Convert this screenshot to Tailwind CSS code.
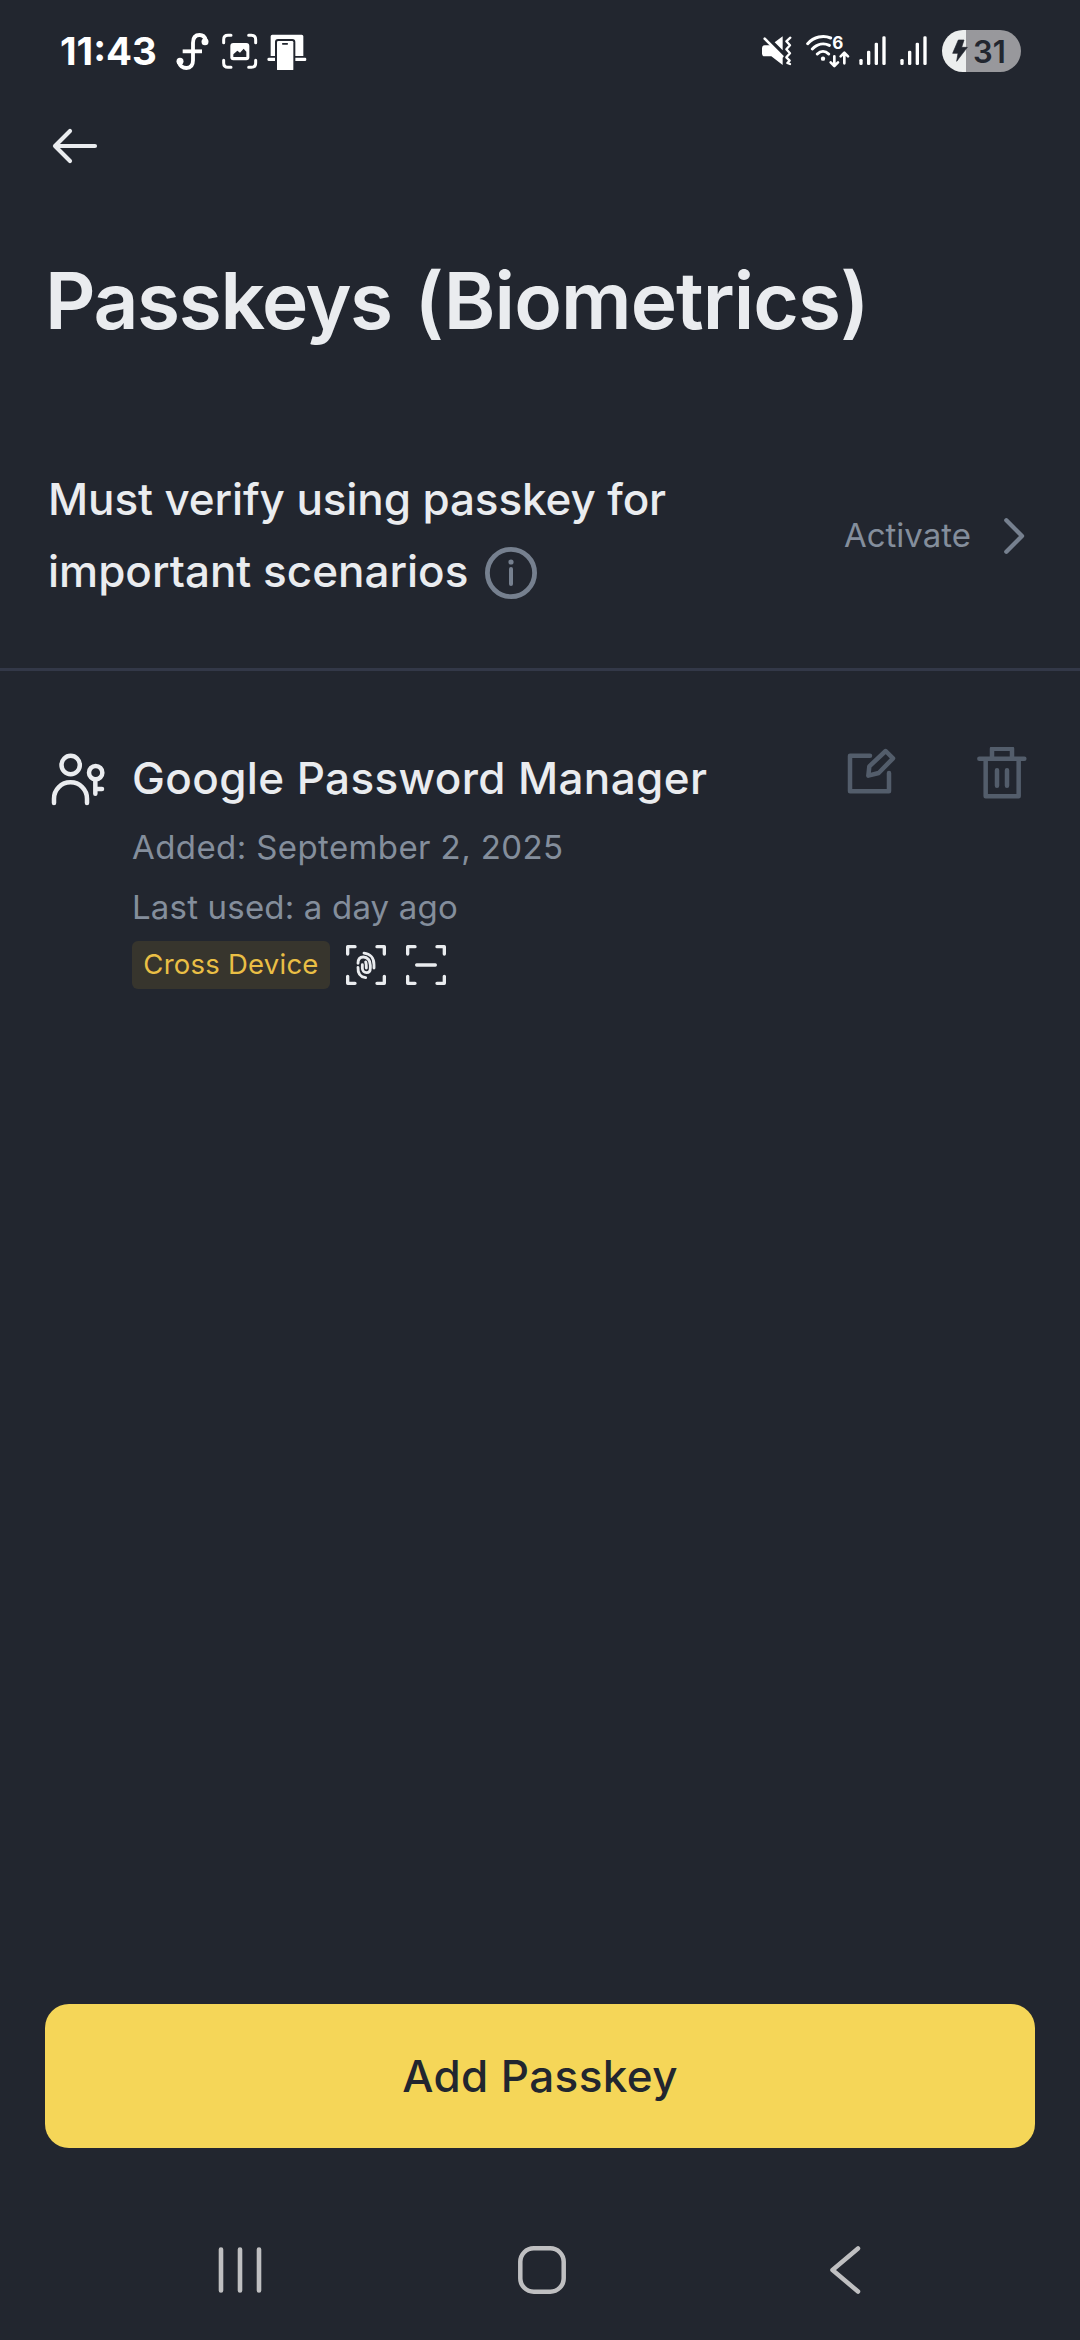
<!DOCTYPE html>
<html lang="en">
<head>
<meta charset="utf-8">
<title>Passkeys (Biometrics)</title>
<script src="https://cdn.jsdelivr.net/npm/@tailwindcss/browser@4"></script>
</head>
<body class="bg-[#22262f]">
<div class="flex h-[2340px] w-[1080px] flex-col overflow-hidden bg-[#22262f] font-['Inter',sans-serif] text-[#eaecef]">

  <!-- Status bar -->
  <header class="flex h-[102px] shrink-0 items-center pl-[60px] pr-[59px] text-white">
    <span class="w-[116px] whitespace-nowrap text-[38.5px] font-bold leading-none">11:43</span>
    <svg class="h-[38px] w-[34px]" viewBox="48 36 102 114" fill="none" stroke="currentColor" stroke-width="11.5" stroke-linecap="round">
      <path d="M137 60C134 49 127 45 119 45C106 45 99 53 99 68V121C99 136 92 144 79 144C67 144 60 137 57 128"/>
      <path d="M68 94H126" stroke-linecap="butt"/>
      <circle cx="135" cy="65" r="10.5" fill="currentColor" stroke="none"/>
      <circle cx="60" cy="124" r="10.5" fill="currentColor" stroke="none"/>
    </svg>
    <svg class="ml-[12px] h-[38px] w-[36px]" viewBox="185 36 108 114" fill="none" stroke="currentColor" stroke-width="9" stroke-linecap="round">
      <path d="M190 68V59Q190 46 203 46H212M265 46H273Q286 46 286 59V68M286 121V129Q286 142 273 142H265M212 142H203Q190 142 190 129V121"/>
      <rect x="210" y="69" width="57" height="52" rx="9" fill="currentColor" stroke="none"/>
      <path d="M219 111V103L231 92L239 98L250 86L258 95V111Z" fill="#22262f" stroke="none"/>
    </svg>
    <svg class="ml-[9px] h-[38px] w-[40px]" viewBox="320 36 120 114" fill="currentColor">
      <path d="M331 49Q331 44 336 44H424Q429 44 429 49V108H405V66Q405 57 396 57H353Q344 57 344 66V108H331Z"/>
      <rect x="350" y="63" width="49" height="89" rx="4"/>
      <rect x="365" y="69" width="18" height="5" rx="2" fill="#22262f"/>
      <path d="M325 113H344V123H325Q321 123 321 118T325 113ZM405 113H435Q438 113 438 118T435 123H405Z"/>
    </svg>

    <svg class="ml-auto h-[38px] w-[33px]" viewBox="63 66 99 114" fill="none" stroke="currentColor" stroke-linecap="round" stroke-linejoin="round">
      <path d="M74 106H93L128 141V165L94 139H74Q66 139 66 131V114Q66 106 74 106ZM104 97L128 79V121Z" fill="currentColor" stroke="none"/>
      <path d="M74 86L127 139" stroke-width="8"/>
      <path d="M151 83L139 94L150 106L139 118L150 130L139 142L149 152L142 159L150 162" stroke-width="7"/>
    </svg>
    <svg class="ml-[12px] h-[38px] w-[44px]" viewBox="198 66 132 114" fill="none" stroke="currentColor" stroke-width="9" stroke-linecap="round" stroke-linejoin="round">
      <path d="M203 101C222 80 250 75 272 84M217 117C232 101 252 98 268 106M232 132C242 122 256 122 266 132"/>
      <circle cx="249" cy="146" r="6.5" fill="currentColor" stroke="none"/>
      <path d="M283 139V167M272 157L283 168L294 157M313 160V129M302 139L313 128L324 139" stroke-width="8"/>
      <text x="277" y="117" font-size="51" font-weight="700" fill="currentColor" stroke="none">6</text>
    </svg>
    <svg class="ml-[9px] h-[38px] w-[28px]" viewBox="357 66 84 114" fill="currentColor">
      <rect x="358" y="147" width="10" height="18" rx="4"/><rect x="381" y="122" width="10" height="43" rx="4"/><rect x="404" y="98" width="10" height="67" rx="4"/><rect x="427" y="79" width="10" height="86" rx="4"/>
    </svg>
    <svg class="ml-[13px] h-[38px] w-[28px]" viewBox="357 66 84 114" fill="currentColor">
      <rect x="358" y="147" width="10" height="18" rx="4"/><rect x="381" y="122" width="10" height="43" rx="4"/><rect x="404" y="98" width="10" height="67" rx="4"/><rect x="427" y="79" width="10" height="86" rx="4"/>
    </svg>
    <div class="ml-[14px] flex h-[42px] w-[79px] items-center overflow-hidden rounded-full bg-linear-to-r from-[#eceeee] from-[24px] to-[#98989c] to-[24px] text-[#22262f]">
      <svg class="ml-[10px] h-[24px] w-[16px] shrink-0" viewBox="636 87 48 72" fill="currentColor">
        <path d="M655 90H672L665 112H682L650 154L654 130H638Z" stroke="currentColor" stroke-width="2" stroke-linejoin="round"/>
      </svg>
      <span class="ml-[5px] text-[31px] font-semibold leading-none">31</span>
    </div>
  </header>

  <!-- Back -->
  <nav class="flex h-[88px] shrink-0 items-center pl-[50px]">
    <svg class="h-[40px] w-[50px]" viewBox="30 348 150 120" fill="none" stroke="currentColor" stroke-width="12.5" stroke-linecap="round" stroke-linejoin="round">
      <path d="M90 363L45 408L90 453M45 408H165"/>
    </svg>
  </nav>

  <h1 class="mt-[60px] h-[101px] shrink-0 whitespace-nowrap pl-[45px] text-[78.4px] font-semibold leading-[101px] tracking-[-0.93px]"><span class="mr-[4px] tracking-[-1.4px]">Passkeys</span> (Biometrics)</h1>

  <!-- Verification setting -->
  <section class="mt-[112px] flex shrink-0 items-center justify-between border-b-[3px] border-[#333848] pb-[61px] pl-[48px] pr-[55px]">
    <div class="text-[44px] font-medium leading-[72px]">
      <div class="whitespace-nowrap tracking-[-0.11px]">Must verify using passkey for</div>
      <div class="flex items-center whitespace-nowrap">important scenarios
        <svg class="ml-[17px] mt-[4px] h-[52px] w-[52px]" viewBox="0 0 52 52" fill="none" stroke="#76808f" stroke-width="4.8">
          <circle cx="26" cy="26" r="23.6"/>
          <path d="M26 22V37" stroke-width="4" stroke-linecap="round"/>
          <circle cx="26" cy="15" r="2.6" fill="#76808f" stroke="none"/>
        </svg>
      </div>
    </div>
    <div class="flex items-center text-[#848e9c]">
      <span class="text-[33px] leading-none">Activate</span>
      <svg class="ml-[32px] mt-[2px] h-[36px] w-[22px]" viewBox="550 84 66 108" fill="none" stroke="#76808f" stroke-width="13" stroke-linecap="round" stroke-linejoin="round">
        <path d="M560 91L607 138L560 185"/>
      </svg>
    </div>
  </section>

  <!-- Passkey entry -->
  <section class="flex shrink-0 items-start pl-[50px] pr-[53px] pt-[77px]">
    <svg class="mt-[4px] h-[56px] w-[56px]" viewBox="60 66 168 168" fill="none" stroke="currentColor" stroke-width="13.5" stroke-linecap="round" stroke-linejoin="round">
      <circle cx="122" cy="105" r="27.5"/>
      <path d="M72 219V206A49 49 0 0 1 121 157H122A49 49 0 0 1 171 206V219"/>
      <circle cx="197" cy="128" r="20"/>
      <path d="M196 150V191M196 177H216"/>
    </svg>
    <div class="ml-[26px] flex flex-col">
      <h2 class="whitespace-nowrap pb-[9px] text-[44px] font-medium leading-[60px] tracking-[0.38px]">Google Password Manager</h2>
      <p class="whitespace-nowrap text-[33px] leading-[60px] tracking-[0.4px] text-[#848e9c]">Added: September 2, 2025</p>
      <p class="whitespace-nowrap text-[33px] leading-[60px] tracking-[0.18px] text-[#848e9c]">Last used: a day ago</p>
      <div class="flex items-center pt-[4px]">
        <span class="h-[48px] w-[198px] whitespace-nowrap rounded-[6px] bg-[#37352d] text-center text-[27.5px] leading-[47px] tracking-[0.24px] text-[#eabf45]">Cross Device</span>
        <svg class="ml-[15px] h-[42px] w-[42px]" viewBox="15 12 126 126" fill="none" stroke="currentColor" stroke-width="10" stroke-linecap="round" stroke-linejoin="round">
          <path d="M23 42V20H45M111 20H133V42M133 109V130H111M45 130H23V109"/>
          <g stroke-width="8.5">
            <path d="M72 39.5C91 41 102 55 102 74V84"/>
            <path d="M54 70C54 57 61 51 70 51C82 51 91 61 91 76V84C91 93 86 98 80 98C72 98 67 92 67 85V74"/>
            <path d="M77 66C79 70 79 75 79 84"/>
            <path d="M54 82C53 100 62 111 77 113"/>
          </g>
        </svg>
        <svg class="ml-[18px] h-[42px] w-[42px]" viewBox="15 12 126 126" fill="none" stroke="currentColor" stroke-width="10" stroke-linecap="round" stroke-linejoin="round">
          <path d="M23 42V20H45M111 20H133V42M133 109V130H111M45 130H23V109M50 75H106"/>
        </svg>
      </div>
    </div>
    <div class="-mt-[1px] ml-auto flex items-start gap-[80px] text-[#535d6b]">
      <svg class="h-[50px] w-[50px]" viewBox="81 50 150 150" fill="none" stroke="currentColor" stroke-width="13.5" stroke-linecap="round" stroke-linejoin="round">
        <path d="M150 76H90V183H207V128"/>
        <path d="M197 62L219 84L176 128L145 136L148 108Z"/>
      </svg>
      <svg class="h-[55px] w-[50px]" viewBox="471 53 150 165" fill="none" stroke="currentColor" stroke-width="13.5" stroke-linecap="round" stroke-linejoin="round">
        <path d="M478 88H613M516 88V58H576V88M497 88V201H596V88M531 123V169M561 123V169"/>
      </svg>
    </div>
  </section>

  <!-- Primary action -->
  <button class="mx-[45px] mt-auto flex h-[144px] shrink-0 items-center justify-center rounded-[24px] bg-[#f5d658] text-[44px] font-medium leading-none tracking-[0.4px] text-[#22262f]">Add Passkey</button>

  <!-- System navigation -->
  <footer class="mt-[52px] flex h-[140px] shrink-0 items-center pl-[216px] text-[#bfbfc1]">
    <svg class="h-[48px] w-[48px]" viewBox="0 0 48 48" fill="none" stroke="currentColor" stroke-width="4.6" stroke-linecap="round"><path d="M5 3.5V44.5M24 3.5V44.5M43 3.5V44.5"/></svg>
    <svg class="ml-[254px] h-[48px] w-[48px]" viewBox="0 0 48 48" fill="none" stroke="currentColor" stroke-width="4.5"><rect x="2.3" y="2.3" width="43.4" height="43.4" rx="13.5"/></svg>
    <svg class="ml-[263px] h-[48px] w-[34px]" viewBox="0 0 34 48" fill="none" stroke="currentColor" stroke-width="4.5" stroke-linecap="round" stroke-linejoin="round"><path d="M29 2.5L3.5 24L29 45.5"/></svg>
  </footer>
</div>
</body>
</html>
